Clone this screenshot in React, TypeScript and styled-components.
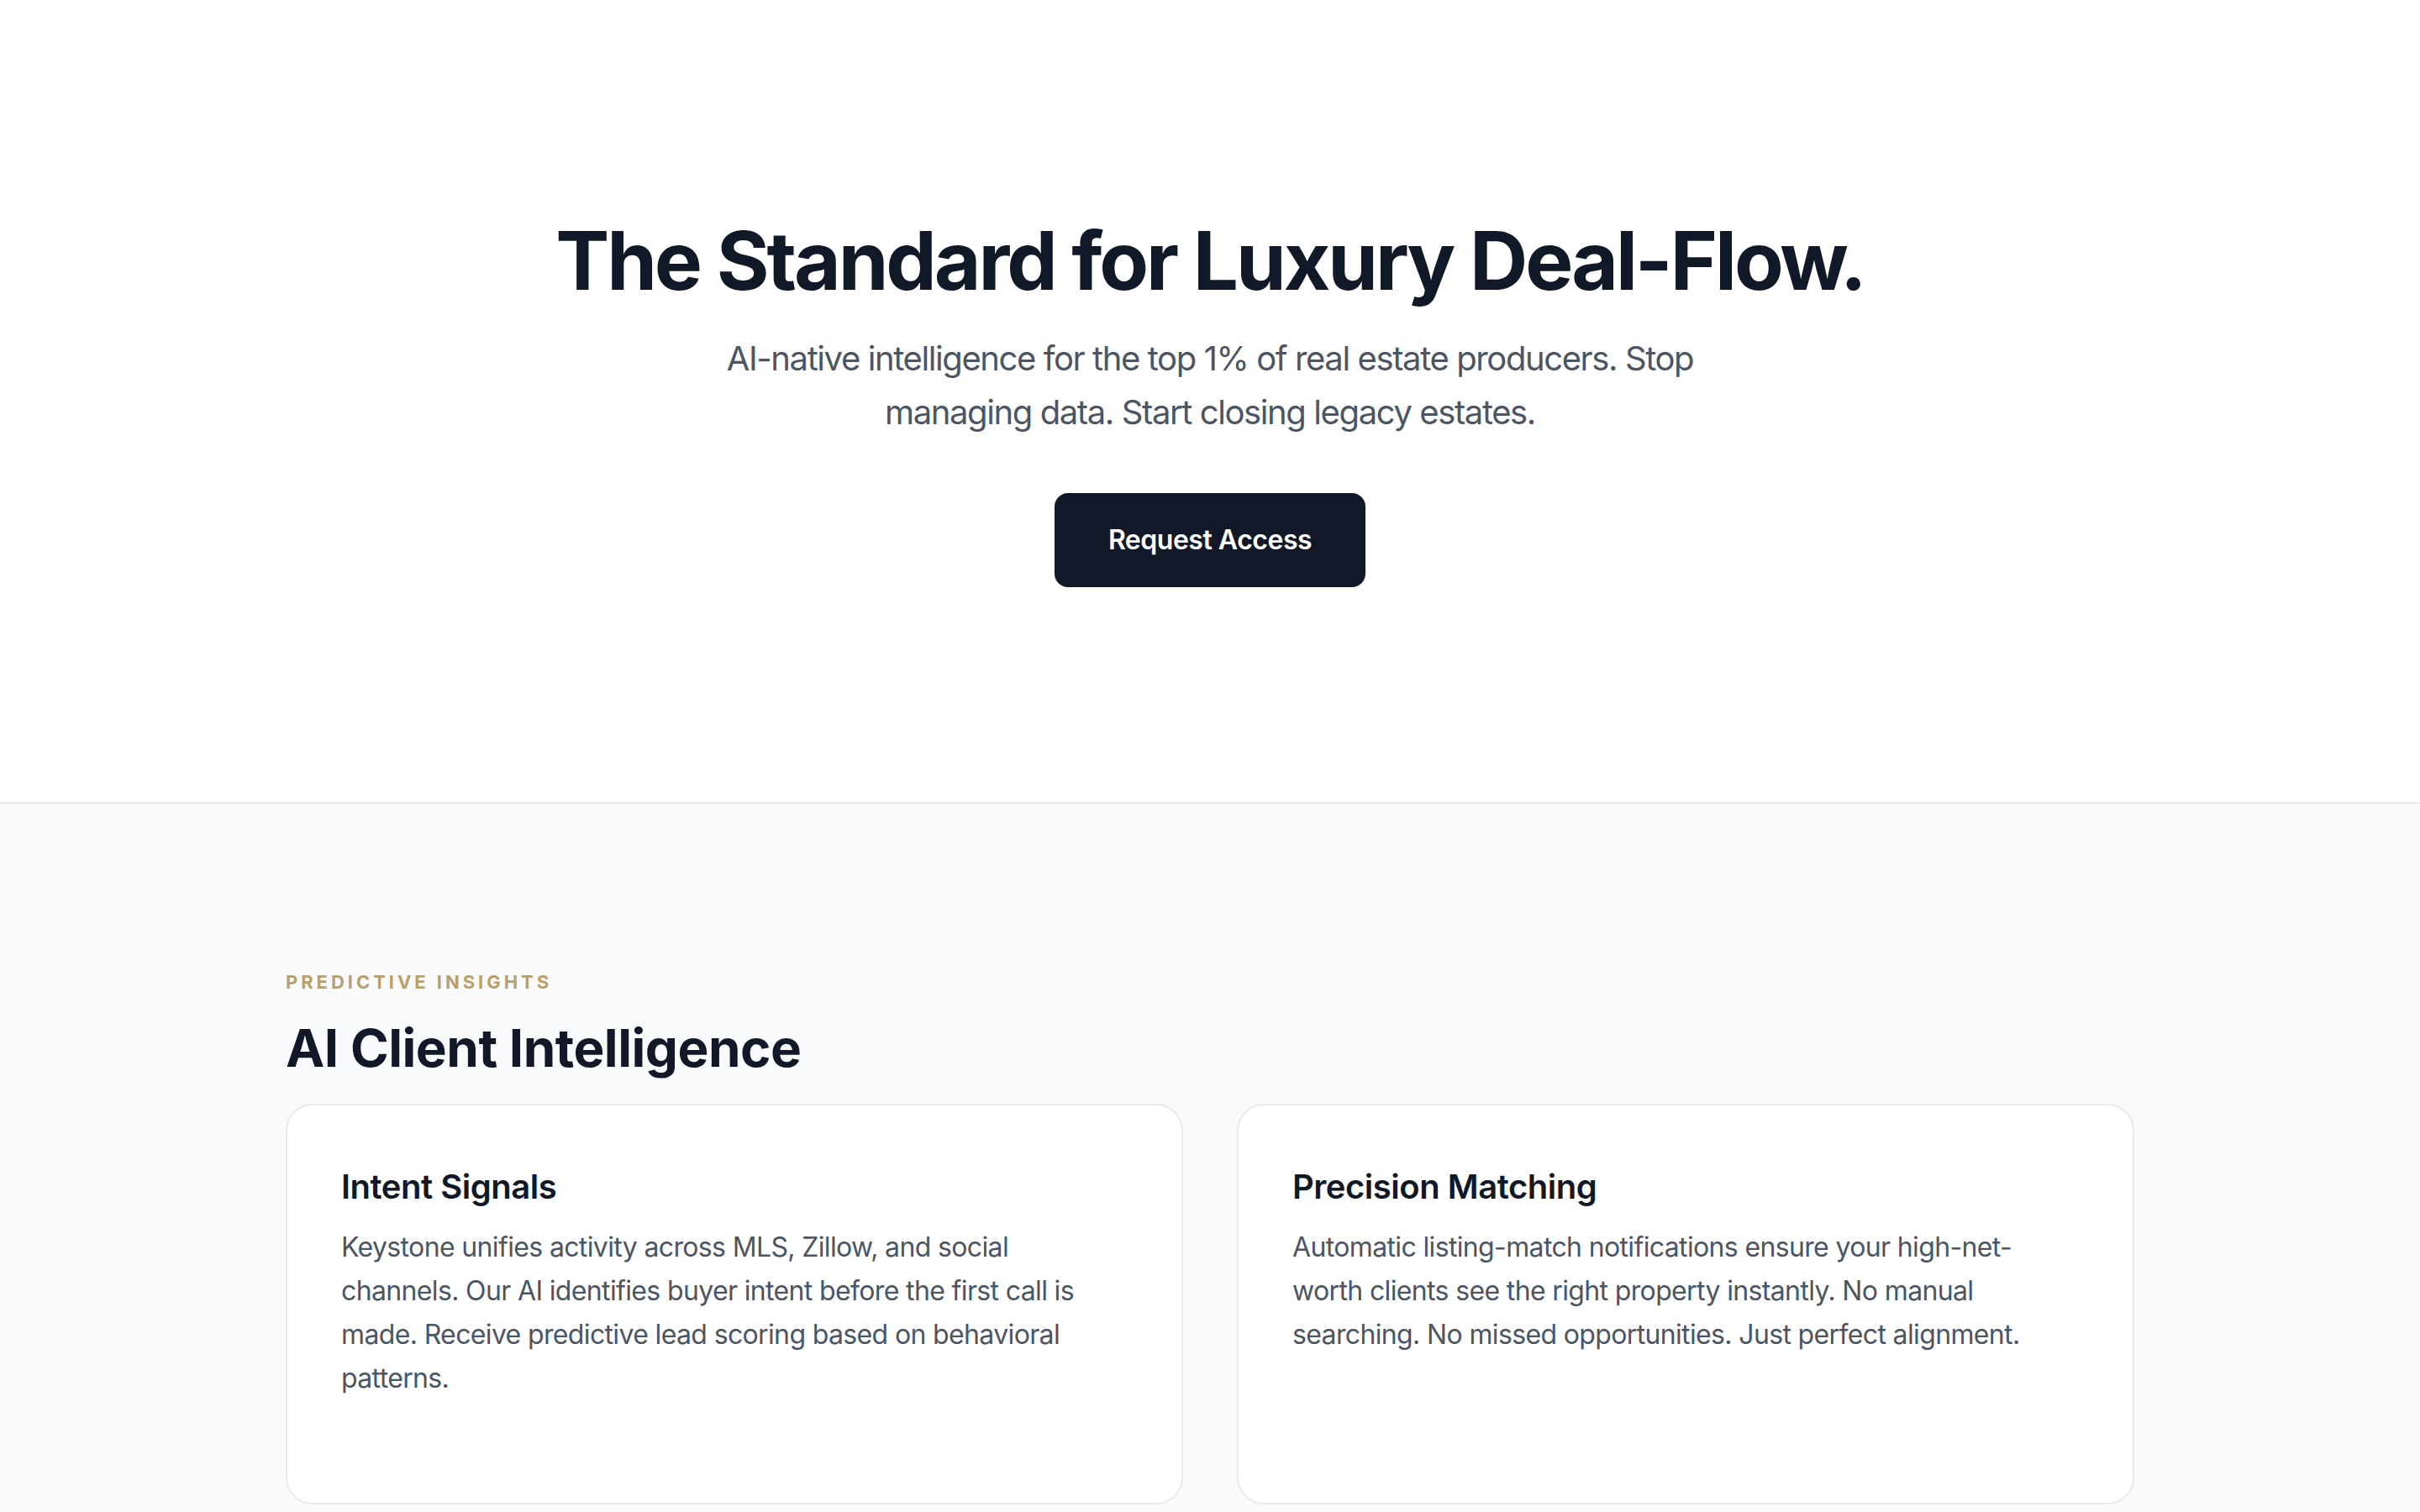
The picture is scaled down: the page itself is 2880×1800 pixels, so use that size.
import React from "react";
import styled, { createGlobalStyle } from "styled-components";

const GlobalStyle = createGlobalStyle`
  * { box-sizing: border-box; }
  html, body { margin: 0; padding: 0; background: #ffffff; }
  body {
    font-family: Inter, "Noto Sans", "Liberation Sans", sans-serif;
    color: #111827;
    -webkit-font-smoothing: antialiased;
  }
`;

const Page = styled.main`
  display: flex;
  flex-direction: column;
  min-height: 100vh;
`;

const Hero = styled.section`
  display: flex;
  flex-direction: column;
  align-items: center;
  padding: 258px 64px 256px;
  background: #ffffff;
  border-bottom: 2px solid #e5e7eb;
  text-align: center;
`;

const HeroTitle = styled.h1`
  margin: 0 0 31px;
  font-size: 96px;
  line-height: 1.1;
  font-weight: 700;
  letter-spacing: -0.032em;
  color: #111827;
`;

const HeroLead = styled.p`
  margin: 0 0 64px;
  max-width: 1152px;
  font-size: 40px;
  line-height: 64px;
  font-weight: 400;
  letter-spacing: -0.035em;
  color: #4b5563;
`;

const PrimaryButton = styled.button`
  display: inline-flex;
  align-items: center;
  justify-content: center;
  padding: 32px 64px;
  border: none;
  border-radius: 16px;
  background: #111827;
  color: #ffffff;
  font-family: inherit;
  font-size: 32px;
  line-height: 48px;
  font-weight: 600;
  letter-spacing: -0.015em;
  cursor: pointer;
`;

const Features = styled.section`
  flex: 1;
  background: #f9fafb;
  padding: 194px 64px 192px;
`;

const Container = styled.div`
  max-width: 2200px;
  margin: 0 auto;
`;

const Eyebrow = styled.p`
  margin: 0 0 22px;
  font-size: 22px;
  line-height: 36px;
  font-weight: 700;
  letter-spacing: 0.18em;
  text-transform: uppercase;
  color: #b9a06b;
`;

const SectionTitle = styled.h2`
  margin: 0 0 28px;
  font-size: 62px;
  line-height: 1.25;
  font-weight: 700;
  letter-spacing: -0.008em;
  color: #111827;
`;

const CardGrid = styled.div`
  display: grid;
  grid-template-columns: repeat(2, minmax(0, 1fr));
  gap: 64px;
`;

const Card = styled.article`
  display: flex;
  flex-direction: column;
  min-height: 477px;
  padding: 67px 64px 64px;
  background: #ffffff;
  border: 2px solid #e8eaee;
  border-radius: 32px;
`;

const CardTitle = styled.h3`
  margin: 0 0 16px;
  font-size: 40px;
  line-height: 60px;
  font-weight: 600;
  letter-spacing: -0.012em;
  color: #111827;
`;

const CardText = styled.p`
  margin: 0;
  font-size: 32px;
  line-height: 52px;
  font-weight: 400;
  letter-spacing: -0.02em;
  color: #4b5563;
`;

const features = [
  {
    title: "Intent Signals",
    text: "Keystone unifies activity across MLS, Zillow, and social channels. Our AI identifies buyer intent before the first call is made. Receive predictive lead scoring based on behavioral patterns.",
  },
  {
    title: "Precision Matching",
    text: "Automatic listing-match notifications ensure your high-net-worth clients see the right property instantly. No manual searching. No missed opportunities. Just perfect alignment.",
  },
];

export default function App() {
  return (
    <>
      <GlobalStyle />
      <Page>
        <Hero>
          <HeroTitle>The Standard for Luxury Deal-Flow.</HeroTitle>
          <HeroLead>
            AI-native intelligence for the top 1% of real estate producers. Stop
            managing data. Start closing legacy estates.
          </HeroLead>
          <PrimaryButton type="button">Request Access</PrimaryButton>
        </Hero>
        <Features>
          <Container>
            <Eyebrow>Predictive Insights</Eyebrow>
            <SectionTitle>AI Client Intelligence</SectionTitle>
            <CardGrid>
              {features.map((f) => (
                <Card key={f.title}>
                  <CardTitle>{f.title}</CardTitle>
                  <CardText>{f.text}</CardText>
                </Card>
              ))}
            </CardGrid>
          </Container>
        </Features>
      </Page>
    </>
  );
}
